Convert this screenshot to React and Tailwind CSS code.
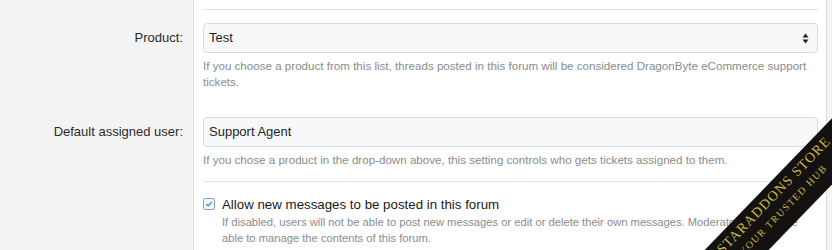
import React from 'react';

const Row = ({ label, labelPad = 'pt-5', children, className = '', border = false }) => (
  <div className="flex">
    <div className={`w-[194px] shrink-0 bg-[#f3f3f3] border-r border-[#e1e1e1] pr-[10px] text-right text-[13px] leading-4 text-[#2b2b2b] ${labelPad}`}>
      {label}
    </div>
    <div className={`flex-1 pl-[9px] ${className}`}>
      <div className={`mr-[8px] ${border ? 'border-b border-[#e3e3e3]' : ''}`}>{children}</div>
    </div>
  </div>
);

const Ribbon = () => (
  <div className="absolute left-[624px] top-[178px] w-[320px] h-[46px] bg-[#141210] rotate-[-46deg] flex flex-col items-center justify-center font-['Liberation_Serif',serif] text-[#c9b541] uppercase leading-none pointer-events-none">
    <div className="text-[14px] tracking-[1px] mt-[-8px] ml-[-6px]">Staraddons Store</div>
    <div className="text-[10px] tracking-[1.4px] mt-[5px] ml-[-14px]">Your Trusted Hub</div>
  </div>
);

export default function App() {
  return (
    <div className="relative w-[832px] h-[250px] overflow-hidden bg-[#f4f4f4] font-['Liberation_Sans',Arial,sans-serif]">
      <div className="w-[827px] bg-white border-r border-[#dcdcdc]">
        <Row label="" labelPad="" border>
          <div className="h-[9px]" />
        </Row>

        <Row label="Product:" labelPad="pt-[20px]" className="pt-[13px] pb-[14px]">
          <div className="h-[30px] rounded-[4px] border border-[#d6dadf] bg-[#f6f8fa] flex items-center justify-between pl-[5px] pr-[8px] text-[13px] text-[#1f1f1f]">
            <span>Test</span>
            <svg width="7" height="11" viewBox="0 0 7 11">
              <path d="M3.5 0.5 L6.5 4.5 H0.5 Z" fill="#222" />
              <path d="M3.5 10.5 L6.5 6.5 H0.5 Z" fill="#222" />
            </svg>
          </div>
          <p className="mt-[5px] text-[11.6px] leading-4 text-[#8b8b8b]">
            If you choose a product from this list, threads posted in this forum will be considered DragonByte eCommerce support tickets.
          </p>
        </Row>

        <Row label="Default assigned user:" labelPad="pt-[20px]" className="pt-[13px]" border>
          <div className="h-[30px] rounded-[4px] border border-[#d6dadf] bg-[#f6f8fa] flex items-center pl-[5px] text-[13px] text-[#1f1f1f]">
            Support Agent
          </div>
          <p className="mt-[5px] mb-[13px] text-[11.6px] leading-4 text-[#8b8b8b]">
            If you chose a product in the drop-down above, this setting controls who gets tickets assigned to them.
          </p>
        </Row>

        <Row label="" labelPad="" className="pt-[14px] pb-[20px]">
          <div className="flex items-start gap-[7px]">
            <div className="mt-[2px] w-[12px] h-[12px] shrink-0 rounded-[2px] border border-[#7fa9c9] bg-[#eef5fb] flex items-center justify-center">
              <svg width="8" height="8" viewBox="0 0 8 8">
                <path d="M1.2 4.2 L3.2 6 L6.8 1.8" fill="none" stroke="#4f86b3" strokeWidth="1.2" />
              </svg>
            </div>
            <div>
              <div className="text-[13.3px] leading-[18px] text-[#1a1a1a]">Allow new messages to be posted in this forum</div>
              <p className="text-[11.2px] leading-4 text-[#8b8b8b]">
                If disabled, users will not be able to post new messages or edit or delete their own messages. Moderators will still be able to manage the contents of this forum.
              </p>
            </div>
          </div>
        </Row>
      </div>
      <Ribbon />
    </div>
  );
}
